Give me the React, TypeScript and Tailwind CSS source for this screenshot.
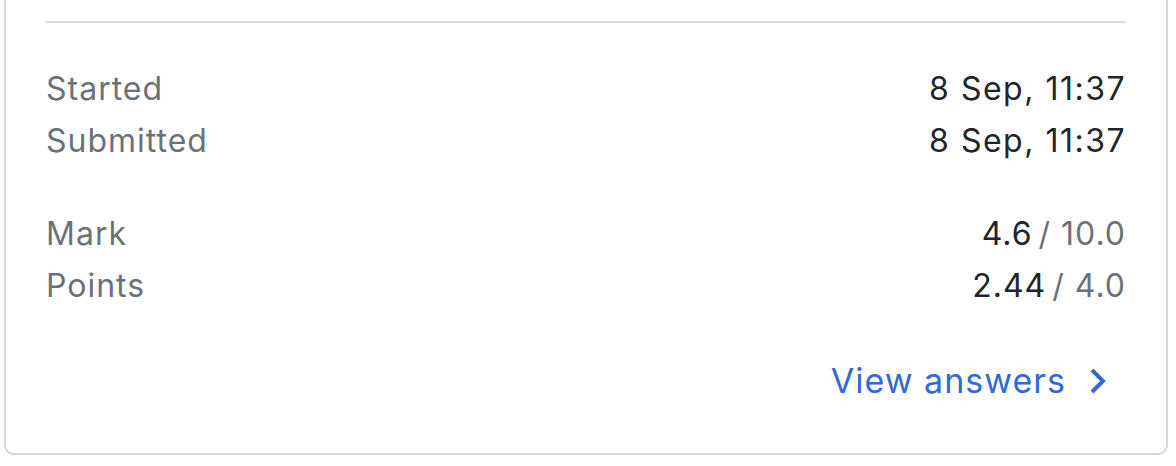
const rows = [
  { label: "Started", value: "8 Sep, 11:37" },
  { label: "Submitted", value: "8 Sep, 11:37" },
]

const scores = [
  { label: "Mark", value: "4.6", total: "10.0" },
  { label: "Points", value: "2.44", total: "4.0" },
]

const ChevronRight = () => (
  <svg width="20" height="28" viewBox="0 0 20 28" fill="none" className="shrink-0">
    <path d="M4 3 L15 14 L4 25" stroke="currentColor" strokeWidth="4" strokeLinecap="butt" strokeLinejoin="miter" />
  </svg>
)

const App = () => {
  return (
    <div className="h-[466px] w-[1176px] overflow-hidden bg-white font-['Inter',sans-serif]">
      <div className="ml-[4px] h-[455px] w-[1164px] rounded-b-[10px] border-x-2 border-b-2 border-[#d4d6da] px-[40px] pt-[21px]">
        <div className="h-[2px] w-full bg-[#d9dbde]" />

        <div className="mt-[40px] flex flex-col">
          {rows.map((r) => (
            <div key={r.label} className="flex items-center justify-between text-[32px] leading-[52px] tracking-[1px]">
              <span className="text-[#6b717a]">{r.label}</span>
              <span className="tracking-[1.5px] text-[#212529]">{r.value}</span>
            </div>
          ))}
        </div>

        <div className="mt-[41px] flex flex-col">
          {scores.map((s) => (
            <div key={s.label} className="flex items-center justify-between text-[32px] leading-[52px] tracking-[1px]">
              <span className="text-[#6b717a]">{s.label}</span>
              <span className="flex items-center gap-[6px] text-[#212529]">
                <span>{s.value}</span>
                <span className="text-[#6b717a]">/ {s.total}</span>
              </span>
            </div>
          ))}
        </div>

        <div className="mt-[49px] flex justify-end pr-[18px]">
          <button className="flex items-center gap-[22px] text-[34px] leading-[40px] tracking-[1px] text-[#2f6ad6]">
            <span>View answers</span>
            <ChevronRight />
          </button>
        </div>
      </div>
    </div>
  )
}

export default App
